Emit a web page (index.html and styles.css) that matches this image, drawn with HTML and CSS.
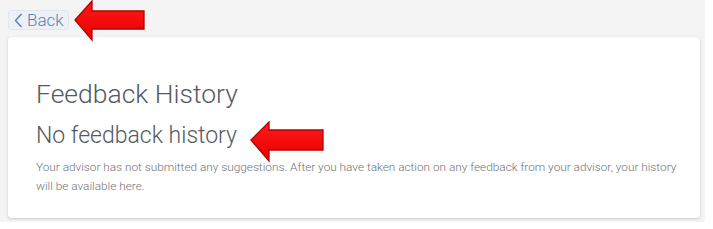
FILE: index.html
```html
<!DOCTYPE html>
<html>
<head>
    <meta charset="UTF-8">
    <title>Feedback History</title>
    <link rel="stylesheet" href="styles.css">
</head>
<body>
    <div class="page">
        <div class="top-bar">
            <button class="back-button">
                <svg class="back-icon" width="9" height="15" viewBox="0 0 9 15">
                    <path d="M7.5 1 L1.5 7.5 L7.5 14" fill="none" stroke="#5b7db8" stroke-width="1.4"/>
                </svg>
                <span>Back</span>
            </button>
        </div>

        <div class="card">
            <h1 class="card-title">Feedback History</h1>
            <h2 class="empty-title">No feedback history</h2>
            <p class="empty-text">Your advisor has not submitted any suggestions. After you have taken action on any feedback from your advisor, your history will be available here.</p>
        </div>

        <!-- annotation arrows -->
        <svg class="arrow arrow-back" width="74" height="42" viewBox="0 0 74 42">
            <defs>
                <linearGradient id="redFill" x1="0" y1="0" x2="0" y2="1">
                    <stop offset="0" stop-color="#ff1a1a"/>
                    <stop offset="1" stop-color="#e60000"/>
                </linearGradient>
            </defs>
            <polygon points="1,20 18,1 18,11 70,11 70,29 18,29 18,40" fill="url(#redFill)" stroke="#b30000" stroke-width="1.3"/>
        </svg>
        <svg class="arrow arrow-empty" width="76" height="44" viewBox="0 0 76 44">
            <polygon points="1,19 19,1 19,9 73,9 73,29 19,29 19,40" fill="url(#redFill)" stroke="#b30000" stroke-width="1.3"/>
        </svg>
    </div>
</body>
</html>
```

FILE: styles.css
```css
* {
    margin: 0;
    padding: 0;
    box-sizing: border-box;
}

body {
    background: #ffffff;
    font-family: Roboto, 'Liberation Sans', sans-serif;
    font-weight: 300;
}

.page {
    position: relative;
    width: 705px;
    height: 222px;
    background: #f4f4f4;
    padding: 10px 5px 0 8px;
}

.top-bar {
    display: flex;
    height: 27px;
}

.back-button {
    display: flex;
    align-items: center;
    gap: 4px;
    height: 20px;
    padding: 0 4px 0 5px;
    background: #edf1f6;
    border: 1px solid #e1e7ef;
    border-radius: 3px;
    color: #5b7db8;
    font-family: Roboto, 'Liberation Sans', sans-serif;
    font-weight: 300;
    font-size: 17px;
    cursor: pointer;
}

.card {
    width: 692px;
    height: 181px;
    background: #ffffff;
    border-radius: 4px;
    box-shadow: 0 1px 3px rgba(0,0,0,0.18);
    padding: 41px 14px 0 28px;
    color: #555a60;
}

.card-title {
    font-size: 26.5px;
    font-weight: 300;
    line-height: 32px;
}

.empty-title {
    margin-top: 12px;
    font-size: 23px;
    font-weight: 300;
    line-height: 28px;
}

.empty-text {
    margin-top: 8px;
    font-size: 11.8px;
    line-height: 19px;
    color: #6f7377;
}

/* annotation arrows */
.arrow {
    position: absolute;
}

.arrow-back {
    left: 74px;
    top: 0;
}

.arrow-empty {
    left: 250px;
    top: 121px;
}
```
